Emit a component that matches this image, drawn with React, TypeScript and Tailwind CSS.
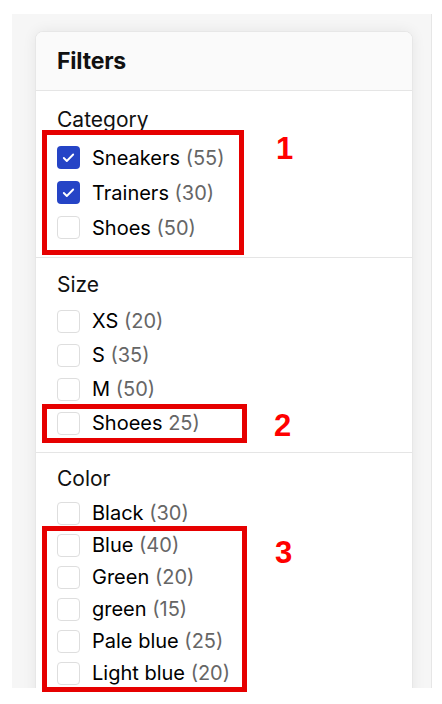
import React from "react";

type Option = { label: string; count: string; checked?: boolean };

const sections: { title: string; rowH: string; pt: string; gap: string; pb: string; options: Option[] }[] = [
  {
    title: "Category",
    rowH: "h-[35px]",
    pt: "pt-[16px]",
    gap: "mt-[7px]",
    pb: "pb-[12px]",
    options: [
      { label: "Sneakers", count: "(55)", checked: true },
      { label: "Trainers", count: "(30)", checked: true },
      { label: "Shoes", count: "(50)" },
    ],
  },
  {
    title: "Size",
    rowH: "h-[34px]",
    pt: "pt-[14px]",
    gap: "mt-[6px]",
    pb: "pb-[12px]",
    options: [
      { label: "XS", count: "(20)" },
      { label: "S", count: "(35)" },
      { label: "M", count: "(50)" },
      { label: "Shoees", count: "25)" },
    ],
  },
  {
    title: "Color",
    rowH: "h-[32px]",
    pt: "pt-[13px]",
    gap: "mt-[5px]",
    pb: "pb-[40px]",
    options: [
      { label: "Black", count: "(30)" },
      { label: "Blue", count: "(40)" },
      { label: "Green", count: "(20)" },
      { label: "green", count: "(15)" },
      { label: "Pale blue", count: "(25)" },
      { label: "Light blue", count: "(20)" },
    ],
  },
];

function Checkbox({ checked }: { checked?: boolean }) {
  if (checked) {
    return (
      <span className="w-[23px] h-[23px] rounded-[4px] bg-[#2544c6] flex items-center justify-center shrink-0">
        <svg width="15" height="15" viewBox="0 0 16 16" fill="none">
          <path d="M3 8.5l3.2 3.2L13 4.8" stroke="white" strokeWidth="2" strokeLinecap="round" strokeLinejoin="round" />
        </svg>
      </span>
    );
  }
  return <span className="w-[23px] h-[23px] rounded-[4px] border border-[#dedede] bg-white shrink-0" />;
}

const numFont = { fontFamily: "'Liberation Sans', Arial, sans-serif" };

export default function App() {
  return (
    <div className="w-[442px] h-[704px] bg-white relative pl-[12px] pt-[14px]" style={{ fontFamily: "Inter, 'Noto Sans', sans-serif" }}>
      <div className="w-[420px] h-[674px] bg-[#f6f6f6] border-r border-[#e6e6e6] overflow-hidden pl-[23px] pt-[17px]">
        <div className="w-[378px] bg-white rounded-[8px] border border-[#e7e7e7] shadow-[0_0_14px_rgba(0,0,0,0.07)] overflow-hidden">
          <div className="h-[59px] bg-[#fafafa] border-b border-[#e5e5e5] px-[21px] flex items-center">
            <span className="text-[23px] font-bold text-[#111] tracking-[-0.2px]">Filters</span>
          </div>
          {sections.map((s, i) => (
            <div key={s.title} className={`px-[21px] ${s.pt} ${s.pb} ${i < sections.length - 1 ? "border-b border-[#e5e5e5]" : ""}`}>
              <div className="h-[26px] flex items-center text-[21px] text-[#111]">{s.title}</div>
              <div className={`${s.gap} flex flex-col`}>
                {s.options.map((o) => (
                  <div key={o.label} className={`${s.rowH} flex items-center gap-[12px]`}>
                    <Checkbox checked={o.checked} />
                    <span className="text-[20px] text-black">
                      {o.label} <span className="text-[#666]">{o.count}</span>
                    </span>
                  </div>
                ))}
              </div>
            </div>
          ))}
        </div>
      </div>

      {/* annotation overlays */}
      <div className="absolute left-[42px] top-[130px] w-[202px] h-[125px] border-[5px] border-[#e60000]" />
      <div className="absolute left-[42px] top-[404px] w-[205px] h-[39px] border-[5px] border-[#e60000]" />
      <div className="absolute left-[42px] top-[526px] w-[205px] h-[166px] border-[5px] border-[#e60000]" />
      <span className="absolute left-[276px] top-[126px] text-[31px] font-bold text-[#f00]" style={numFont}>1</span>
      <span className="absolute left-[274px] top-[403px] text-[31px] font-bold text-[#f00]" style={numFont}>2</span>
      <span className="absolute left-[275px] top-[530px] text-[31px] font-bold text-[#f00]" style={numFont}>3</span>
    </div>
  );
}
